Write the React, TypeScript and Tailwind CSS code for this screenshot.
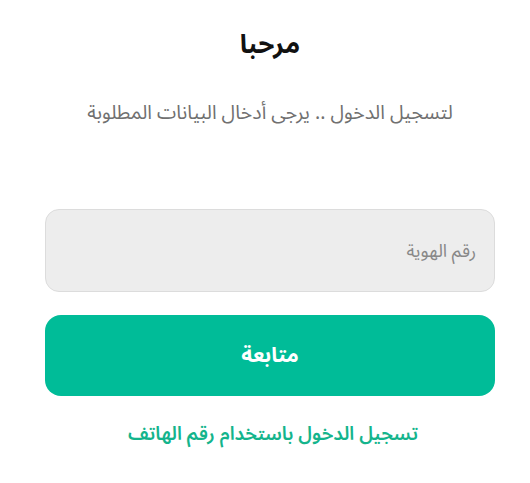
export default function App() {
  return (
    <div
      dir="rtl"
      className="w-[530px] h-[483px] bg-white flex flex-col items-center pl-[10px]"
      style={{ fontFamily: "'Noto Sans Arabic', 'Noto Sans Arabic UI', 'Noto Sans', 'DejaVu Sans', sans-serif" }}
    >
      <h1 className="mt-[28px] text-[26px] font-bold text-[#111] leading-[34px]">مرحبا</h1>
      <p className="mt-[37px] text-[19.5px] text-[#707070] leading-[28px]">
        لتسجيل الدخول .. يرجى أدخال البيانات المطلوبة
      </p>

      <div className="mt-[82px] w-[450px] flex flex-col">
        <input
          type="text"
          placeholder="رقم الهوية"
          className="h-[83px] w-full rounded-[14px] border border-[#dcdcdc] bg-[#ededed] px-[18px] text-[18px] text-[#333] placeholder:text-[#888] outline-none"
        />
        <button className="mt-[23px] h-[81px] w-full rounded-[16px] bg-[#00bc98] text-[21px] font-bold text-white">
          متابعة
        </button>
        <a className="mt-[22px] pl-[6px] text-center text-[19px] font-semibold text-[#14b48c] leading-[32px]">
          تسجيل الدخول باستخدام رقم الهاتف
        </a>
      </div>
    </div>
  );
}
